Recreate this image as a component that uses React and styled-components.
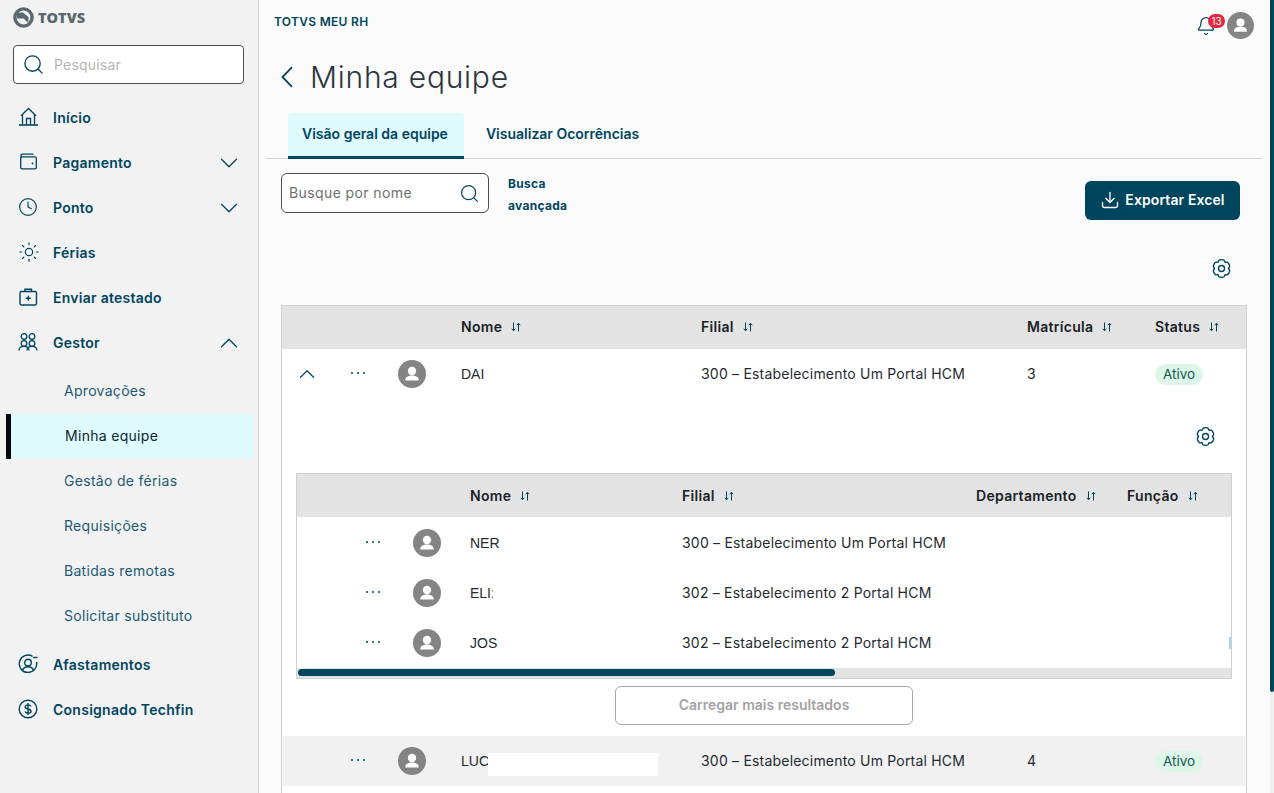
import React from 'react'
import styled, { createGlobalStyle } from 'styled-components'
import { Search, ChevronDown, ChevronUp, Clock, Sun, Bell, Download } from 'lucide-react'

const teal = '#00455e'

const GlobalStyle = createGlobalStyle`
  html, body { margin: 0; padding: 0; height: 100%; overflow: hidden; }
  body { font-family: Inter, "Liberation Sans", sans-serif; background: #fbfbfb; color: #1f2a30; }
  * { box-sizing: border-box; }
`

const Page = styled.div`
  display: flex;
  width: 1274px;
  height: 793px;
  overflow: hidden;
`

const Sidebar = styled.aside`
  flex: 0 0 259px;
  background: #f2f2f2;
  border-right: 1px solid #d4d4d4;
  display: flex;
  flex-direction: column;
`

const LogoRow = styled.div`
  display: flex;
  align-items: center;
  gap: 4px;
  height: 45px;
  padding: 0 0 10px 13px;
  color: #586a70;
`

const LogoText = styled.span`
  font-family: "Open Sans", sans-serif;
  font-weight: 800;
  font-size: 14.5px;
  letter-spacing: 0;
`

const SideSearch = styled.div`
  display: flex;
  align-items: center;
  gap: 9px;
  height: 39px;
  margin: 0 14px 0 13px;
  padding: 0 8px;
  background: #fff;
  border: 1px solid #4a4f57;
  border-radius: 4px;
  color: ${teal};
`

const Placeholder = styled.span`
  font-size: 14px;
  color: ${p => p.$color || '#b5b5b5'};
  letter-spacing: ${p => p.$spacing || 0.2}px;
  margin-bottom: ${p => p.$up || 0}px;
`

const Nav = styled.nav`
  display: flex;
  flex-direction: column;
  padding-top: 11px;
`

const NavItem = styled.div`
  display: flex;
  align-items: center;
  height: 45px;
  padding: 0 14px 0 18px;
  color: ${teal};
`

const NavIcon = styled.span`
  display: flex;
  width: 35px;
  margin-top: -2px;
`

const NavLabel = styled.span`
  flex: 1;
  font-size: 14px;
  font-weight: 600;
  letter-spacing: 0.26px;
`

const SubList = styled.div`
  display: flex;
  flex-direction: column;
  padding: 4px 0 3px;
`

const SubItem = styled.div`
  display: flex;
  align-items: center;
  height: 45px;
  margin: 0 4px 0 6px;
  padding: 0 0 2px ${p => (p.$active ? '54px' : '58px')};
  font-size: 14px;
  letter-spacing: 0.3px;
  color: ${p => (p.$active ? '#0b2530' : '#1d5a72')};
  background: ${p => (p.$active ? '#e0fbfe' : 'transparent')};
  border-left: ${p => (p.$active ? '5px solid #05080a' : 'none')};
  border-radius: 0 4px 4px 0;
`

const Main = styled.main`
  flex: 1;
  min-width: 0;
  display: flex;
  flex-direction: column;
  padding: 0 8px 0 7px;
`

const TopBar = styled.header`
  display: flex;
  align-items: flex-start;
  justify-content: space-between;
  height: 53px;
  padding: 14px 8px 0 8px;
`

const Brand = styled.span`
  font-size: 12px;
  line-height: 15px;
  font-weight: 600;
  letter-spacing: 0.3px;
  color: ${teal};
`

const TopActions = styled.div`
  display: flex;
  align-items: center;
  gap: 11px;
  margin-top: -2px;
`

const BellWrap = styled.span`
  position: relative;
  display: flex;
  color: ${teal};
`

const Badge = styled.span`
  position: absolute;
  top: -2px;
  left: 12px;
  width: 17px;
  height: 14px;
  border-radius: 7px;
  background: #e5283f;
  color: #fff;
  font-size: 10px;
  line-height: 14px;
  text-align: center;
`

const TitleRow = styled.div`
  display: flex;
  align-items: center;
  height: 48px;
  padding-left: 15px;
  color: ${teal};
`

const Title = styled.h1`
  margin: 0 0 0 17px;
  font-size: 30px;
  font-weight: 300;
  letter-spacing: 0.75px;
  color: #2c3640;
`

const Tabs = styled.div`
  display: flex;
  height: 46px;
  margin-top: 12px;
  padding-left: 22px;
  border-bottom: 1px solid #d4d4d4;
`

const Tab = styled.div`
  display: flex;
  align-items: center;
  height: 46px;
  padding: 0 ${p => (p.$active ? '16px' : '22px')} 2px ${p => (p.$active ? '14px' : '22px')};
  font-size: 14px;
  font-weight: 600;
  color: ${teal};
  background: ${p => (p.$active ? '#e0fbfe' : 'transparent')};
  border-bottom: 3px solid ${p => (p.$active ? teal : 'transparent')};
  border-radius: 4px 4px 0 0;
`

const FilterRow = styled.div`
  display: flex;
  align-items: flex-start;
  padding: 14px 15px 0;
  height: 88px;
`

const NameSearch = styled.div`
  display: flex;
  align-items: center;
  justify-content: space-between;
  width: 208px;
  height: 40px;
  padding: 0 8px 0 7px;
  background: #fff;
  border: 1px solid #4a4f57;
  border-radius: 6px;
  color: ${teal};
`

const AdvancedLink = styled.span`
  width: 80px;
  margin-left: 19px;
  font-size: 12px;
  line-height: 22px;
  font-weight: 700;
  letter-spacing: 0.3px;
  color: ${teal};
`

const ExportButton = styled.button`
  display: flex;
  align-items: center;
  justify-content: center;
  gap: 5px;
  width: 155px;
  height: 39px;
  margin: 8px 7px 0 auto;
  padding: 0 0 2px;
  border: 0;
  border-radius: 6px;
  background: ${teal};
  color: #fff;
  font-family: inherit;
  font-size: 14px;
  font-weight: 600;
  letter-spacing: 0.1px;
`

const GearRow = styled.div`
  display: flex;
  justify-content: flex-end;
  height: ${p => p.$height}px;
  padding: ${p => p.$top}px ${p => p.$right}px 0 0;
  color: ${teal};
`

const TableBox = styled.div`
  flex: ${p => (p.$open ? 1 : 'none')};
  margin: 0 ${p => p.$right}px 0 ${p => p.$left}px;
  border: 1px solid #cfcfcf;
  border-bottom: ${p => (p.$open ? 'none' : '1px solid #cfcfcf')};
  background: #fff;
`

const RowGroup = styled.div`
  padding-top: 1px;
`

const Row = styled.div`
  display: grid;
  grid-template-columns: ${p => p.$cols};
  align-items: center;
  height: ${p => p.$height}px;
  padding-left: ${p => p.$pad || 0}px;
  background: ${p => p.$bg || 'transparent'};
  overflow: hidden;
`

const HeadCell = styled.div`
  display: flex;
  align-items: center;
  gap: 9px;
  margin-bottom: ${p => p.$up || 0}px;
  font-size: 14px;
  font-weight: 600;
  letter-spacing: 0.3px;
  color: #1a2126;
  white-space: nowrap;
`

const Cell = styled.div`
  margin-bottom: 2px;
  font-size: 14px;
  letter-spacing: 0.2px;
  color: #1f2a30;
  white-space: nowrap;
  overflow: hidden;
`

const IconCell = styled.div`
  display: flex;
  align-items: center;
  margin-left: ${p => p.$shift || 0}px;
  color: ${teal};
`

const NameCell = styled.div`
  display: flex;
  align-items: center;
  font-family: "Liberation Sans", sans-serif;
  font-size: 14px;
  color: #1f2a30;
  white-space: nowrap;
  width: ${p => (p.$w ? `${p.$w}px` : 'auto')};
  overflow: hidden;
`

const Redaction = styled.span`
  flex: none;
  width: 170px;
  height: 23px;
  margin: 7px 0 0 -1px;
  background: #fff;
`

const StatusCell = styled.div`
  display: flex;
`

const Pill = styled.span`
  display: inline-block;
  height: 21px;
  padding: 0 8px;
  border-radius: 11px;
  background: #def5ea;
  color: #0f5c4a;
  font-size: 13.5px;
  line-height: 21px;
`

const CutOff = styled.span`
  display: block;
  width: 3px;
  height: 12px;
  background: #a9d4f2;
  border-right: 1px solid #4a6f85;
`

const ScrollTrack = styled.div`
  height: 10px;
  padding: 1px;
  background: #e3e3e3;
`

const ScrollThumb = styled.div`
  width: 537px;
  height: 7px;
  border-radius: 4px;
  background: ${teal};
`

const LoadRow = styled.div`
  display: flex;
  justify-content: center;
  height: 57px;
  padding-top: 7px;
`

const LoadButton = styled.button`
  width: 298px;
  height: 39px;
  padding: 0 0 2px;
  background: #fff;
  border: 1px solid #a6a6a6;
  border-radius: 6px;
  font-family: inherit;
  font-size: 14px;
  font-weight: 600;
  color: #a3a3a3;
`

const PageScroll = styled.div`
  flex: 0 0 4px;
  height: 793px;
  background: #f0f0f0;
`

const PageThumb = styled.div`
  height: 692px;
  background: ${teal};
  border-radius: 0 0 2px 2px;
`

const Avatar = ({ size = 28 }) => (
  <svg width={size} height={size} viewBox="0 0 28 28">
    <circle cx="14" cy="14" r="14" fill="#848484" />
    <circle cx="14" cy="11" r="4.2" fill="#fff" />
    <path d="M7.200 20.400c0-3.600 3-5 6.800-5s6.800 1.400 6.800 5z" fill="#fff" />
  </svg>
)

const SortIcon = () => (
  <svg width="10" height="10" viewBox="0 0 10 10" fill="none" stroke="#00455e" strokeWidth="1">
    <path d="M2.500 0.500v8M0.800 6.800l1.700 2 1.700-2" />
    <path d="M7.500 9.500v-8M5.800 3.200l1.700-2 1.700 2" />
  </svg>
)

const Dots = () => (
  <svg width="16" height="16" viewBox="0 0 16 16" fill="#00455e">
    <circle cx="2" cy="7" r="1" />
    <circle cx="8" cy="7" r="1" />
    <circle cx="14" cy="7" r="1" />
  </svg>
)

const BackArrow = () => (
  <svg width="12" height="22" viewBox="0 0 12 22" fill="none" stroke="currentColor" strokeWidth="1.800">
    <path d="M11 1.200L1.500 11l9.500 9.800" />
  </svg>
)

const Gear = () => (
  <svg width="21" height="21" viewBox="0 0 21 21" fill="none" stroke="currentColor" strokeWidth="1.400" strokeLinejoin="round">
    <path d="M8 2.200c.9-.8 4.100-.8 5 0 .5.500.4 1.500 1 1.900.6.300 1.500-.1 2.200.1 1.100.4 2.700 3.200 2.400 4.400-.2.700-1 1.100-1.100 1.900 0 .7.900 1.200 1.100 1.900.3 1.200-1.300 4-2.400 4.400-.7.200-1.600-.2-2.200.1-.6.400-.5 1.400-1 1.900-.9.800-4.100.8-5 0-.5-.5-.4-1.500-1-1.900-.6-.3-1.500.1-2.200-.1-1.100-.4-2.700-3.200-2.400-4.400.2-.7 1.100-1.200 1.100-1.900-.1-.8-.9-1.200-1.100-1.900-.3-1.200 1.300-4 2.400-4.400.7-.2 1.600.2 2.200-.1.600-.4.500-1.400 1-1.900z" />
    <circle cx="10.500" cy="10.500" r="3" />
  </svg>
)

const TotvsMark = () => (
  <svg width="21" height="21" viewBox="0 0 21 21">
    <circle cx="10.500" cy="10.500" r="8.600" fill="none" stroke="#586a70" strokeWidth="3.400" />
    <path d="M4 5.500h6l5.500 4.500v6l-5-4.500H4z" fill="#586a70" />
  </svg>
)

const HomeIcon = () => (
  <svg width="21" height="20" viewBox="0 0 21 20" fill="none" stroke="currentColor" strokeWidth="1.300">
    <path d="M3 8.800L10.500 1.500 18 8.800M4.500 7.500v10M16.500 7.500v10" />
    <path d="M8.500 17.500v-6h4v6" />
    <path d="M1 18h19" strokeWidth="1.600" />
  </svg>
)

const WalletIcon = () => (
  <svg width="20" height="20" viewBox="0 0 20 20" fill="none" stroke="currentColor" strokeWidth="1.300">
    <path d="M3 6V3.500c0-.8.500-1.300 1.300-1.300h11.200" />
    <rect x="2.700" y="4.800" width="15.600" height="12" rx="1.200" />
    <circle cx="14.500" cy="11.500" r=".9" fill="currentColor" stroke="none" />
  </svg>
)

const CaseIcon = () => (
  <svg width="20" height="20" viewBox="0 0 20 20" fill="none" stroke="currentColor" strokeWidth="1.400">
    <rect x="2" y="4.500" width="16.500" height="13.500" rx="1.400" />
    <path d="M7 4.500V2.200h6.500v2.300" />
    <path d="M7.800 11.300h5M10.300 8.800v5" />
  </svg>
)

const TeamIcon = () => (
  <svg width="20" height="20" viewBox="0 0 20 20" fill="none" stroke="currentColor" strokeWidth="1.300">
    <circle cx="6" cy="4.500" r="2.800" />
    <circle cx="14" cy="4.500" r="2.800" />
    <circle cx="6" cy="11.500" r="2.800" />
    <circle cx="14" cy="11.500" r="2.800" />
    <path d="M1 18.500c0-2.800 2-4.200 5-4.200s5 1.400 5 4.200M9 18.500c0-2.800 2-4.200 5-4.200s5 1.400 5 4.200" />
  </svg>
)

const AwayIcon = () => (
  <svg width="20" height="20" viewBox="0 0 20 20" fill="none" stroke="currentColor" strokeWidth="1.400">
    <path d="M14.500 2.300A8.700 8.700 0 1 0 18.500 8" />
    <path d="M15 3.500h4.500" />
    <circle cx="10" cy="8.500" r="3.300" />
    <path d="M4.500 16.500c.8-2.500 2.800-3.700 5.500-3.700s4.700 1.200 5.500 3.700" />
  </svg>
)

const MoneyIcon = () => (
  <svg width="20" height="20" viewBox="0 0 20 20" fill="none" stroke="currentColor" strokeWidth="1.400">
    <circle cx="10" cy="10" r="8.800" />
    <path d="M13 7.500c-.4-1-1.500-1.600-3-1.600-1.700 0-2.800.8-2.800 2 0 2.900 5.800 1.400 5.800 4.300 0 1.200-1.200 2-3 2-1.500 0-2.600-.6-3-1.600M10 4v12" />
  </svg>
)

const outerCols = '52px 48px 63px 240px 326px 128px 1fr'
const innerCols = '68px 48px 57px 212px 294px 151px 102px 3px'

const navTop = [
  { label: 'Início', icon: <HomeIcon /> },
  { label: 'Pagamento', icon: <WalletIcon />, arrow: 'down' },
  { label: 'Ponto', icon: <Clock size={20} strokeWidth={1.400} />, arrow: 'down' },
  { label: 'Férias', icon: <Sun size={22} strokeWidth={1.300} /> },
  { label: 'Enviar atestado', icon: <CaseIcon /> },
  { label: 'Gestor', icon: <TeamIcon />, arrow: 'up' },
]

const subItems = ['Aprovações', 'Minha equipe', 'Gestão de férias', 'Requisições', 'Batidas remotas', 'Solicitar substituto']

const team = [
  { name: 'NER', filial: '300 – Estabelecimento Um Portal HCM' },
  { name: 'ELI:', width: 23, filial: '302 – Estabelecimento 2 Portal HCM' },
  { name: 'JOS', filial: '302 – Estabelecimento 2 Portal HCM', cut: true },
]

const NavEntry = ({ item }) => (
  <NavItem>
    <NavIcon>{item.icon}</NavIcon>
    <NavLabel>{item.label}</NavLabel>
    {item.arrow === 'down' && <ChevronDown size={30} strokeWidth={1} />}
    {item.arrow === 'up' && <ChevronUp size={30} strokeWidth={1} />}
  </NavItem>
)

const Head = ({ children, up }) => (
  <HeadCell $up={up}>{children}<SortIcon /></HeadCell>
)

export default function App() {
  return (
    <Page>
      <GlobalStyle />
      <Sidebar>
        <LogoRow>
          <TotvsMark />
          <LogoText>TOTVS</LogoText>
        </LogoRow>
        <SideSearch>
          <Search size={23} strokeWidth={1.400} />
          <Placeholder>Pesquisar</Placeholder>
        </SideSearch>
        <Nav>
          {navTop.map(item => <NavEntry key={item.label} item={item} />)}
          <SubList>
            {subItems.map(label => (
              <SubItem key={label} $active={label === 'Minha equipe'}>{label}</SubItem>
            ))}
          </SubList>
          <NavEntry item={{ label: 'Afastamentos', icon: <AwayIcon /> }} />
          <NavEntry item={{ label: 'Consignado Techfin', icon: <MoneyIcon /> }} />
        </Nav>
      </Sidebar>

      <Main>
        <TopBar>
          <Brand>TOTVS MEU RH</Brand>
          <TopActions>
            <BellWrap>
              <Bell size={20} strokeWidth={1.500} />
              <Badge>13</Badge>
            </BellWrap>
            <Avatar size={27} />
          </TopActions>
        </TopBar>

        <TitleRow>
          <BackArrow />
          <Title>Minha equipe</Title>
        </TitleRow>

        <Tabs>
          <Tab $active>Visão geral da equipe</Tab>
          <Tab>Visualizar Ocorrências</Tab>
        </Tabs>

        <FilterRow>
          <NameSearch>
            <Placeholder $color="#6f6f6f" $spacing={0.4} $up={2}>Busque por nome</Placeholder>
            <Search size={21} strokeWidth={1.400} />
          </NameSearch>
          <AdvancedLink>Busca avançada</AdvancedLink>
          <ExportButton>
            <Download size={20} strokeWidth={1.600} />
            Exportar Excel
          </ExportButton>
        </FilterRow>

        <GearRow $height={58} $top={11} $right={30}><Gear /></GearRow>

        <TableBox $left={15} $right={15} $open>
          <Row $cols={outerCols} $height={43} $pad={16} $bg="#e3e3e3">
            <span /><span /><span />
            <Head up={2}>Nome</Head>
            <Head up={2}>Filial</Head>
            <Head up={2}>Matrícula</Head>
            <Head up={2}>Status</Head>
          </Row>
          <Row $cols={outerCols} $height={50} $pad={16}>
            <IconCell $shift={-4}><ChevronUp size={26} strokeWidth={1.100} /></IconCell>
            <IconCell><Dots /></IconCell>
            <IconCell><Avatar /></IconCell>
            <NameCell>DAI</NameCell>
            <Cell>300 – Estabelecimento Um Portal HCM</Cell>
            <Cell>3</Cell>
            <StatusCell><Pill>Ativo</Pill></StatusCell>
          </Row>

          <GearRow $height={74} $top={27} $right={30}><Gear /></GearRow>

          <TableBox $left={14} $right={14}>
            <Row $cols={innerCols} $height={43} $bg="#e3e3e3">
              <span /><span /><span />
              <Head>Nome</Head>
              <Head>Filial</Head>
              <Head>Departamento</Head>
              <Head>Função</Head>
            </Row>
            <RowGroup>
              {team.map(person => (
                <Row key={person.name} $cols={innerCols} $height={50}>
                  <span />
                  <IconCell><Dots /></IconCell>
                  <IconCell><Avatar /></IconCell>
                  <NameCell $w={person.width}>{person.name}</NameCell>
                  <Cell>{person.filial}</Cell>
                  <span />
                  <span />
                  {person.cut ? <CutOff /> : <span />}
                </Row>
              ))}
            </RowGroup>
            <ScrollTrack><ScrollThumb /></ScrollTrack>
          </TableBox>

          <LoadRow><LoadButton>Carregar mais resultados</LoadButton></LoadRow>

          <Row $cols={outerCols} $height={50} $pad={16} $bg="#f1f1f1">
            <span />
            <IconCell><Dots /></IconCell>
            <IconCell><Avatar /></IconCell>
            <NameCell>LUC<Redaction /></NameCell>
            <Cell>300 – Estabelecimento Um Portal HCM</Cell>
            <Cell>4</Cell>
            <StatusCell><Pill>Ativo</Pill></StatusCell>
          </Row>
        </TableBox>
      </Main>

      <PageScroll><PageThumb /></PageScroll>
    </Page>
  )
}
